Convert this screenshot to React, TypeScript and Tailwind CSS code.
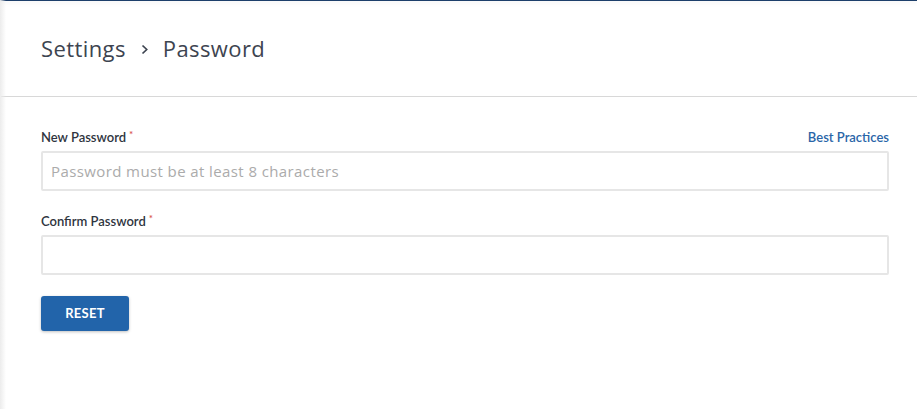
import React from 'react';

const Label: React.FC<{ text: string }> = ({ text }) => (
    <label className="text-[13px] font-semibold text-[#2f3540]">
        {text}
        <span className="text-[#d9534f] text-[10px] align-top ml-[3px] relative top-[-1px]">*</span>
    </label>
);

export default function App() {
    return (
        <div
            className="w-[917px] h-[409px] bg-white relative overflow-hidden"
            style={{ fontFamily: 'Lato, "Open Sans", sans-serif' }}
        >
            {/* top bar edge + left shade */}
            <div className="absolute top-0 left-0 right-0 h-px bg-[#1d3f6b] shadow-[0_1px_5px_rgba(0,0,0,0.15)]" />
            <div className="absolute top-0 bottom-0 left-0 w-[6px] bg-gradient-to-r from-[#ececec] to-transparent" />

            {/* Header */}
            <div className="h-[97px] border-b border-[#d8d8d8] flex items-center pl-[40px] ml-px">
                <h1
                    className="text-[22px] text-[#3d4450] flex items-center gap-[13px] tracking-[0.4px] mt-[1px]"
                    style={{ fontFamily: '"Open Sans", sans-serif' }}
                >
                    <span>Settings</span>
                    <svg width="11" height="13" viewBox="0 0 11 13" className="mt-[2px]">
                        <path d="M3.5 2.5l4.2 4-4.2 4" fill="none" stroke="#3d4450" strokeWidth="1.7" />
                    </svg>
                    <span>Password</span>
                </h1>
            </div>

            {/* Form */}
            <div className="pl-[41px] pr-[28px] pt-[31px]">
                <div className="flex items-end justify-between h-[19px]">
                    <Label text="New Password" />
                    <a className="text-[13px] font-semibold text-[#2a65a8]">Best Practices</a>
                </div>
                <input
                    type="password"
                    placeholder="Password must be at least 8 characters"
                    className="mt-[4px] w-full h-[40px] border-2 border-[#e6e6e6] rounded-[2px] px-[8px] text-[15px] tracking-[0.4px] text-[#333] placeholder:text-[#ababab] outline-none"
                    style={{ fontFamily: '"Open Sans", sans-serif' }}
                />

                <div className="mt-[21px] h-[19px] flex items-end">
                    <Label text="Confirm Password" />
                </div>
                <input
                    type="password"
                    className="mt-[4px] w-full h-[40px] border-2 border-[#e6e6e6] rounded-[2px] px-[8px] text-[14px] outline-none"
                />

                <button className="mt-[21px] w-[88px] h-[35px] bg-[#2264aa] rounded-[3px] text-white text-[13px] font-bold tracking-[0.3px] shadow-[0_1px_3px_rgba(0,0,0,0.25)]">
                    RESET
                </button>
            </div>
        </div>
    );
}
